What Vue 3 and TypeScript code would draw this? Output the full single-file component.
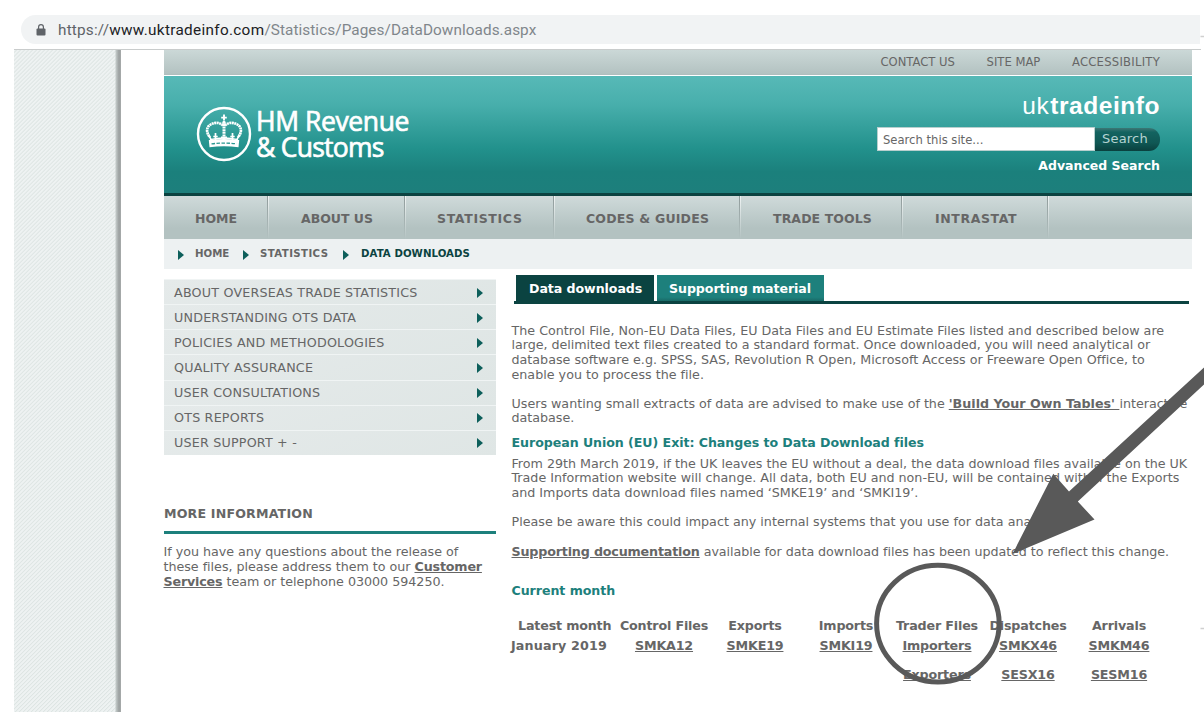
<script setup lang="ts">
interface NavItem {
  label: string
  key: string
}

const utilityLinks: NavItem[] = [
  { label: 'CONTACT US', key: 'contact' },
  { label: 'SITE MAP', key: 'sitemap' },
  { label: 'ACCESSIBILITY', key: 'access' },
]

const navItems: NavItem[] = [
  { label: 'HOME', key: 'home' },
  { label: 'ABOUT US', key: 'about' },
  { label: 'STATISTICS', key: 'stats' },
  { label: 'CODES & GUIDES', key: 'codes' },
  { label: 'TRADE TOOLS', key: 'trade' },
  { label: 'INTRASTAT', key: 'intrastat' },
]

const crumbs: NavItem[] = [
  { label: 'HOME', key: 'c-home' },
  { label: 'STATISTICS', key: 'c-stats' },
  { label: 'DATA DOWNLOADS', key: 'c-current' },
]

const sideMenu: string[] = [
  'ABOUT OVERSEAS TRADE STATISTICS',
  'UNDERSTANDING OTS DATA',
  'POLICIES AND METHODOLOGIES',
  'QUALITY ASSURANCE',
  'USER CONSULTATIONS',
  'OTS REPORTS',
  'USER SUPPORT + -',
]

const columns: string[] = ['Control Files', 'Exports', 'Imports', 'Trader Files', 'Dispatches', 'Arrivals']
const fileRows: string[][] = [
  ['January 2019', 'SMKA12', 'SMKE19', 'SMKI19', 'Importers', 'SMKX46', 'SMKM46'],
  ['', '', '', '', 'Exporters', 'SESX16', 'SESM16'],
]
</script>

<template>
  <div class="window">
    <div class="toolbar">
      <div class="omnibox">
        <svg class="lock" viewBox="0 0 10 12" width="10" height="12">
          <rect x="0.5" y="4.5" width="9" height="7" rx="1" fill="#5f6368" />
          <path d="M2.6 5V3a2.4 2.4 0 0 1 4.8 0v2" fill="none" stroke="#5f6368" stroke-width="1.2" />
        </svg>
        <span class="url"><span class="scheme">https://</span><span class="host">www.uktradeinfo.com</span><span class="path">/Statistics/Pages/DataDownloads.aspx</span></span>
      </div>
    </div>

    <div class="viewport">
      <div class="stripes"></div>
      <div class="page">
        <div class="utility">
          <a v-for="l in utilityLinks" :key="l.key" :class="l.key">{{ l.label }}</a>
        </div>

        <header class="banner">
          <div class="brand">
            <svg class="crest" viewBox="0 0 56 56" width="56" height="56" fill="none" stroke="#fff">
              <circle cx="28" cy="28" r="26" stroke-width="2.4" />
              <circle cx="28" cy="16.4" r="1.7" fill="#fff" stroke="none" />
              <path d="M28 8.600v6M25.200 11.600h5.600" stroke-width="1.900" />
              <path d="M28 18v16" stroke-width="3" stroke-dasharray="2 .6" />
              <path d="M27 19.500c-3.500-3.600-9-3.400-13-.5-4.200 3-3.600 8 .2 12.600M29 19.500c3.500-3.600 9-3.400 13-.5 4.200 3 3.600 8-.2 12.600" stroke-width="2.700" stroke-dasharray="2 .5" />
              <path d="M14 33.600q14-3.200 28 0" stroke-width="1.300" />
              <path d="M19.500 27v8M17.300 30.500h4.400M36.500 27v8M34.300 30.500h4.400M25 31.300h6" stroke-width="1.700" />
              <path d="M12.800 29.500l3 5.200M43.200 29.500l-3 5.200" stroke-width="1.500" />
              <path d="M12.800 34q15.200-2 30.400 0l-.7 7.200q-14.500-1.800-29 0z" fill="#fff" stroke="none" />
              <path d="M15.500 37.900q12.500-1.700 25 0" stroke="#2c9993" stroke-width="1.300" stroke-dasharray="3.5 1.5" />
            </svg>
            <div class="brand-name"><span class="hm">HM Revenue</span><span class="cust">&amp; Customs</span></div>
          </div>
          <div class="tools">
            <div class="wordmark">uk<b>tradeinfo</b></div>
            <div class="search">
              <div class="field">Search this site...</div>
              <div class="go">Search</div>
            </div>
            <a class="advanced">Advanced Search</a>
          </div>
        </header>

        <nav class="nav">
          <div v-for="n in navItems" :key="n.key" class="nav-item" :class="n.key"><span>{{ n.label }}</span></div>
        </nav>

        <div class="crumbs">
          <div v-for="c in crumbs" :key="c.key" class="crumb" :class="c.key"><i class="tri"></i><span>{{ c.label }}</span></div>
        </div>

        <div class="body">
          <aside class="side">
            <ul class="menu">
              <li v-for="m in sideMenu" :key="m"><span>{{ m }}</span><i class="tri"></i></li>
            </ul>
            <h2 class="more">MORE INFORMATION</h2>
            <p class="contact-text">If you have any questions about the release of<br>these files, please address them to our <a>Customer</a><br><a>Services</a> team or telephone 03000 594250.</p>
          </aside>

          <main class="content">
            <div class="tabs">
              <div class="tab active"><span>Data downloads</span></div>
              <div class="tab"><span>Supporting material</span></div>
            </div>
            <p class="intro">The Control File, Non-EU Data Files, EU Data Files and EU Estimate Files listed and described below are<br><span class="snug">large, delimited text files created to a standard format. Once downloaded, you will need analytical or</span><br>database software e.g. SPSS, SAS, Revolution R Open, Microsoft Access or Freeware Open Office, to<br>enable you to process the file.</p>
            <p class="extracts">Users wanting small extracts of data are advised to make use of the <a>'Build Your Own Tables'&nbsp;</a>interactive<br>database.</p>
            <h3 class="exit">European Union (EU) Exit: Changes to Data Download files</h3>
            <p class="changes">From 29th March 2019, if the UK leaves the EU without a deal, the data download files available on the UK<br>Trade Information website will change. All data, both EU and non-EU, will be contained within the Exports<br>and Imports data download files named ‘SMKE19’ and ‘SMKI19’.</p>
            <p class="aware">Please be aware this could impact any internal systems that you use for data analysis.</p>
            <p class="docs"><a>Supporting documentation</a> available for data download files has been updated to reflect this change.</p>
            <h3 class="current">Current month</h3>
            <div class="files">
              <div class="row head">
                <span class="month">Latest month</span>
                <span v-for="c in columns" :key="c">{{ c }}</span>
              </div>
              <div v-for="(r, i) in fileRows" :key="i" class="row">
                <span v-for="(f, j) in r" :key="j"><a v-if="j > 0 && f">{{ f }}</a><template v-else>{{ f }}</template></span>
              </div>
            </div>
          </main>
        </div>
      </div>
    </div>

    <svg class="annotation" viewBox="0 0 1204 712" width="1204" height="712">
      <path d="M1012.500 554L1053.300 473.800L1069 491.500L1204 367.500V384.500L1077.800 501.500L1094.500 519.500Z" fill="#595959" />
      <ellipse cx="937.900" cy="623.600" rx="61.300" ry="58.300" fill="none" stroke="#595959" stroke-width="5" />
      <path d="M1200.500 36.500h3.500M1200.500 628.500h3.500" stroke="#d0d0d0" stroke-width="1.500" />
    </svg>
  </div>
</template>

<style>
body {
  margin: 0;
  background: #fff;
}
</style>

<style scoped>
.window {
  position: relative;
  width: 1204px;
  height: 712px;
  overflow: hidden;
  background: #fff;
  color: #666;
  font-family: "DejaVu Sans", sans-serif;
  font-size: 12.7px;
  line-height: 14.67px;
  white-space: nowrap;
}
p, h2, h3, ul { margin: 0; padding: 0; }
a { color: inherit; }

.toolbar { height: 49px; box-sizing: border-box; padding: 15px 4px 0 21px; }
.omnibox {
  height: 29px;
  box-sizing: border-box;
  padding-left: 15px;
  display: flex;
  align-items: center;
  background: #f1f3f4;
  border-radius: 15px 0 0 15px;
}
.lock { margin-right: 12px; }
.url { font: 15.3px/30px Roboto, sans-serif; }
.scheme { color: #5f6368; letter-spacing: 0.2px; }
.host { color: #202124; letter-spacing: 0.32px; }
.path { color: #80868b; letter-spacing: 0.08px; }

.viewport {
  display: flex;
  width: 1187px;
  height: 663px;
  margin-left: 14px;
  border-top: 1px solid #c9cccc;
  box-sizing: border-box;
}
.stripes {
  width: 107px;
  margin-right: 43px;
  background:
    linear-gradient(90deg, transparent 101px, #c2c9c8 102px, #9ba0a0 105px, #a7abab 107px),
    repeating-linear-gradient(135deg, #eef2f2 0, #eef2f2 1.1px, #dbe3e1 1.7px, #eef2f2 2.83px);
}
.page { width: 1028px; }

.utility {
  display: flex;
  justify-content: flex-end;
  height: 25px;
  box-sizing: border-box;
  padding-right: 32px;
  gap: 31.6px;
  border-bottom: 1px solid #b0bebe;
  background: linear-gradient(#cbd8d7, #b3c2c1);
  font-size: 11.6px;
  line-height: 25px;
  letter-spacing: 0;
}
.access { letter-spacing: 0.25px; }

.banner {
  display: flex;
  justify-content: space-between;
  height: 121px;
  box-sizing: border-box;
  border-top: 1px solid #fff;
  border-bottom: 3px solid #0b4341;
  background: linear-gradient(#57b9b7 0, #48afac 24%, #22918c 62%, #1b807c 82%, #1d7f7c 100%);
  color: #fff;
}
.brand { display: flex; padding: 30px 0 0 32px; }
.brand-name {
  display: flex;
  flex-direction: column;
  margin: 3px 0 0 4px;
  font: 26.5px/25.5px "Open Sans", sans-serif;
  -webkit-text-stroke: 0.7px #fff;
}
.hm { letter-spacing: -0.4px; }
.cust { letter-spacing: -0.75px; }
.tools { display: flex; flex-direction: column; align-items: flex-end; padding-right: 32px; }
.wordmark { margin: 16px 0 0 0; font: 24.5px/28px "Liberation Sans", sans-serif; letter-spacing: 0.55px; }
.wordmark b { margin-left: 1px; }
.search { display: flex; margin-top: 7px; }
.field {
  width: 218px;
  height: 24px;
  box-sizing: border-box;
  padding-left: 5px;
  border: 1px solid #b8cfce;
  background: #fff;
  color: #666;
  font-size: 11.6px;
  line-height: 24px;
}
.go {
  width: 65px;
  height: 23px;
  margin-top: 1px;
  box-sizing: border-box;
  padding-left: 7px;
  border-radius: 0 11px 11px 0;
  background: linear-gradient(#3d7775 0, #136360 18%, #0f5754 65%, #0a403e);
  color: #b5d3d2;
  font-size: 13px;
  line-height: 22px;
  letter-spacing: 0.2px;
}
.advanced { margin-top: 7px; font-weight: bold; font-size: 12.5px; line-height: 16px; }

.nav { display: flex; height: 43px; background: linear-gradient(#cfdada, #b3c2c1 75%); font-weight: bold; font-size: 12.5px; line-height: 45px; }
.nav-item {
  box-sizing: border-box;
  background:
    linear-gradient(#f0f4f4, #b3c2c1) right / 1px 100% no-repeat,
    linear-gradient(#909b9b, #b3c2c1) right 1px top / 1px 100% no-repeat;
}
.home { width: 105px; padding-left: 31px; }
.about { width: 137px; padding-left: 32px; }
.stats { width: 149px; padding-left: 31px; letter-spacing: 0.65px; }
.codes { width: 186px; padding-left: 31px; letter-spacing: 0.2px; }
.trade { width: 162px; padding-left: 32px; letter-spacing: 0.1px; }
.intrastat { width: 146px; padding-left: 32px; letter-spacing: 0.6px; }

.crumbs { display: flex; height: 30px; background: #edf1f2; font-weight: bold; font-size: 10.2px; line-height: 29px; }
.crumb { display: flex; align-items: center; }
.crumb .tri { margin: 1px 11px 0 0; }
.crumb span { margin-top: -1px; }
.c-home { width: 65px; padding-left: 14px; }
.c-stats { width: 100px; letter-spacing: 0.4px; }
.c-current { color: #0b4341; letter-spacing: 0.05px; }
.c-current .tri { margin-right: 12px; }
.tri { width: 0; height: 0; border-left: 6px solid #0d5f5b; border-top: 5px solid transparent; border-bottom: 5px solid transparent; }

.body { display: flex; }
.side { width: 332px; padding-top: 10px; }
.menu { list-style: none; letter-spacing: 0.2px; }
.menu li {
  display: flex;
  align-items: center;
  justify-content: space-between;
  height: 25.14px;
  box-sizing: border-box;
  padding: 1px 13px 0 10px;
  border-top: 1px solid #f0f4f4;
  background: linear-gradient(160deg, #e5eaea, #dfe6e5);
}
.menu li span { padding-top: 1px; }
.more {
  margin-top: 51px;
  padding-bottom: 10px;
  border-bottom: 3px solid #1d807c;
  font-size: 12.6px;
  line-height: 15px;
  letter-spacing: 0.18px;
}
.contact-text { margin: 11.5px 0 0 -0.5px; letter-spacing: -0.02px; }
.contact-text a, .content p a, .row a { font-weight: bold; text-decoration: underline; letter-spacing: -0.17px; }

.content { width: 678px; margin-left: 15px; }
.tabs { display: flex; gap: 3px; height: 26px; margin: 6px 0 0 3px; padding-left: 2px; border-bottom: 3px solid #0b4341; }
.tab {
  width: 167px;
  box-sizing: border-box;
  padding-left: 12px;
  background: linear-gradient(#1d807c 85%, #196a67);
  color: #fff;
  font-weight: bold;
  font-size: 12.6px;
  line-height: 28px;
  letter-spacing: -0.06px;
}
.tab.active { width: 138px; padding-left: 13px; background: #0b4341; }
.content p, .content h3 { margin-left: 0.5px; }
.content p { letter-spacing: 0.01px; }
.content .snug { letter-spacing: -0.045px; }
.intro { padding-top: 19.5px; }
.extracts { margin-top: 14.5px; }
.content .extracts { letter-spacing: -0.01px; }
.content .extracts a { letter-spacing: 0; }
.content h3 { color: #1d807c; font-size: 12.6px; letter-spacing: -0.05px; }
.exit { margin-top: 10px; }
.changes { margin-top: 6px; }
.content .changes { letter-spacing: -0.01px; }
.aware, .docs { margin-top: 14.67px; }
.content .docs { letter-spacing: -0.05px; }
.current { margin-top: 25px; }
.files { margin-top: 20px; font-weight: bold; letter-spacing: -0.17px; }
.row { display: grid; grid-template-columns: 107.5px 91px 91px 91px 91px 91px 91px; height: 29.4px; text-align: center; }
.row.head { height: 20px; }
.row > span:first-child { text-align: left; letter-spacing: 0.15px; }
.row > .month:first-child { padding-left: 7px; letter-spacing: -0.17px; }

.annotation { position: absolute; left: 0; top: 0; }
</style>
